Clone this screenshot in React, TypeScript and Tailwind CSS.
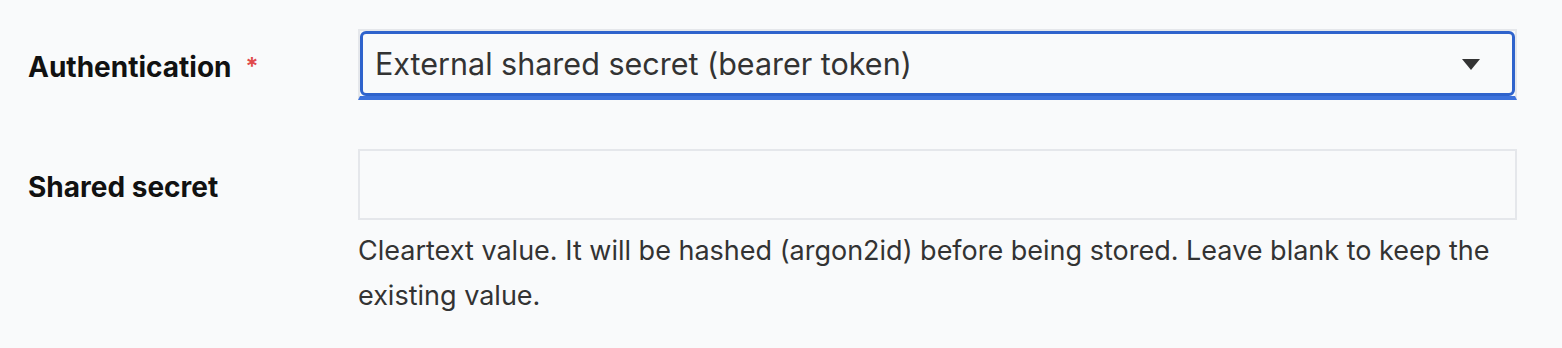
export default function App() {
  return (
    <div className="min-h-[348px] w-full bg-[#f9fafb] pl-[28px] pr-[45px] pt-[29px] font-['Inter',sans-serif]">
      {/* Authentication */}
      <div className="grid grid-cols-[330px_1fr] items-center">
        <div className="flex items-center pt-[4px] text-[28px] font-bold text-[#111]">
          <span>Authentication</span>
          <span className="ml-[14px] text-[24px] font-semibold text-[#e04a4a]">*</span>
        </div>
        <div className="border-2 border-b-[4px] border-[#e5e7eb] border-b-[#3d72dc]">
          <div className="flex h-[65px] items-center justify-between rounded-[6px] border-[3px] border-[#2f63cc] pl-[12px] pr-[32px]">
            <span className="text-[30.5px] text-[#333]">External shared secret (bearer token)</span>
            <svg width="18" height="11" viewBox="0 0 18 11" className="mt-[1px]">
              <path d="M0 0 H18 L9 11 Z" fill="#333" />
            </svg>
          </div>
        </div>
      </div>

      {/* Shared secret */}
      <div className="mt-[49px] grid grid-cols-[330px_1fr]">
        <div className="flex h-[71px] items-center pt-[4px] text-[28px] font-bold text-[#111]">Shared secret</div>
        <div>
          <div className="h-[71px] border-2 border-[#e5e7eb]"></div>
          <p className="mt-[8px] text-[27px] leading-[45px] text-[#333]">
            Cleartext value. It will be hashed (argon2id) before being stored. Leave blank to keep the existing value.
          </p>
        </div>
      </div>
    </div>
  );
}
